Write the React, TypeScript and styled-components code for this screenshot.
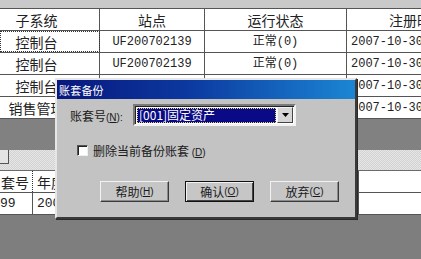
import React from "react";
import styled, { createGlobalStyle } from "styled-components";

const GlobalStyle = createGlobalStyle`
  html, body {
    margin: 0;
    padding: 0;
    background: #7e7e7e;
  }
  body {
    font-family: "Noto Sans CJK SC", "Liberation Sans", sans-serif;
  }
`;

const topRows = [
  { sys: "控制台", site: "UF200702139", state: "正常(0)", date: "2007-10-30", focus: true },
  { sys: "控制台", site: "UF200702139", state: "正常(0)", date: "2007-10-30" },
  { sys: "控制台", site: "UF200702139", state: "正常(0)", date: "2007-10-30" },
  { sys: "销售管理", site: "UF200702139", state: "正常(0)", date: "2007-10-30" },
];

function App() {
  return (
    <>
      <GlobalStyle />
      <Screen>
        <TopStrip />
        <Grid>
          <Row $header>
            <Cell $pr={26}>子系统</Cell>
            <Cell>站点</Cell>
            <Cell>运行状态</Cell>
            <Cell $last>注册时间</Cell>
          </Row>
          {topRows.map((r, i) => (
            <Row key={i}>
              <Cell $pr={26} $focus={r.focus}>{r.sys}</Cell>
              <Cell $mono>{r.site}</Cell>
              <Cell $mono>{r.state}</Cell>
              <Cell $mono $last $left>{r.date}</Cell>
            </Row>
          ))}
        </Grid>
        <GrayGap />
        <TabStrip>
          <TinyButton />
        </TabStrip>
        <Grid2>
          <Row2 $header>
            <Cell2 $right $focus>套号</Cell2>
            <Cell2>年度</Cell2>
            <Cell2 $last />
          </Row2>
          <Row2>
            <Cell2 $mono>99</Cell2>
            <Cell2 $mono>2007</Cell2>
            <Cell2 $last />
          </Row2>
        </Grid2>

        <Dialog>
          <TitleBar>账套备份</TitleBar>
          <Body>
            <FieldRow>
              <Label>
                账套号<Accel>(<u>N</u>):</Accel>
              </Label>
              <Select>
                <SelectValue>
                  <Picked>[001]固定资产</Picked>
                </SelectValue>
                <DropButton>
                  <svg width="7" height="4" viewBox="0 0 7 4">
                    <path d="M0 0h7L3.5 4z" fill="#000" />
                  </svg>
                </DropButton>
              </Select>
            </FieldRow>
            <CheckRow>
              <Box />
              <CheckText>
                删除当前备份账套 <Accel>(<u>D</u>)</Accel>
              </CheckText>
            </CheckRow>
            <Buttons>
              <Button>
                帮助<Accel>(<u>H</u>)</Accel>
              </Button>
              <Button $default>
                确认<Accel>(<u>O</u>)</Accel>
              </Button>
              <Button>
                放弃<Accel>(<u>C</u>)</Accel>
              </Button>
            </Buttons>
          </Body>
        </Dialog>
      </Screen>
    </>
  );
}

const Screen = styled.div`
  position: relative;
  width: 421px;
  height: 259px;
  overflow: hidden;
  background: #7e7e7e;
`;

const TopStrip = styled.div`
  height: 8px;
  background: #c9c9c9;
`;

const Grid = styled.div`
  width: 487px;
  border-top: 1px solid #555;
  background: #fff;
`;

const Row = styled.div<{ $header?: boolean }>`
  display: grid;
  grid-template-columns: 100px 105px 142px 140px;
  height: 21px;
  border-bottom: 1px solid #555;
  font-size: 14px;
  color: #222;
`;

const Cell = styled.div<{ $pr?: number; $mono?: boolean; $last?: boolean; $left?: boolean; $focus?: boolean }>`
  display: flex;
  align-items: center;
  justify-content: ${(p) => (p.$left ? "flex-start" : "center")};
  padding: 0 ${(p) => p.$pr ?? 0}px 0 ${(p) => (p.$left ? 4 : 0)}px;
  border-right: ${(p) => (p.$last ? "none" : "1px solid #555")};
  outline: ${(p) => (p.$focus ? "1px dotted #333" : "none")};
  outline-offset: -1px;
  font-family: ${(p) =>
    p.$mono
      ? '"Liberation Mono", "Noto Sans CJK SC", monospace'
      : '"Noto Sans CJK SC", sans-serif'};
  font-size: ${(p) => (p.$mono ? "12px" : "14px")};
  white-space: nowrap;
  overflow: hidden;
  line-height: 1;
`;

const GrayGap = styled.div`
  height: 31px;
  background: #818181;
`;

const TabStrip = styled.div`
  height: 20px;
  background-color: #dedede;
  background-image: repeating-conic-gradient(#d2d2d2 0% 25%, #e6e6e6 0% 50%);
  background-size: 2px 2px;
  border-bottom: 1px solid #6a6a6a;
`;

const TinyButton = styled.div`
  width: 9px;
  height: 13px;
  margin-left: -1px;
  background: #e4e4e4;
  border-right: 1px solid #555;
  border-bottom: 1px solid #555;
`;

const Grid2 = styled.div`
  width: 421px;
  background: #fff;
`;

const Row2 = styled.div<{ $header?: boolean }>`
  display: grid;
  grid-template-columns: 33px 326px 1fr;
  height: 21px;
  border-bottom: 1px solid #555;
  color: #222;
`;

const Cell2 = styled.div<{ $right?: boolean; $mono?: boolean; $last?: boolean; $focus?: boolean }>`
  display: flex;
  align-items: center;
  justify-content: ${(p) => (p.$right ? "flex-end" : "flex-start")};
  padding: 0 ${(p) => (p.$right ? 3 : 0)}px 0 ${(p) => (p.$right ? 0 : 4)}px;
  border-right: ${(p) => (p.$last ? "none" : p.$focus ? "1px dotted #333" : "1px solid #555")};
  font-family: ${(p) =>
    p.$mono
      ? '"Liberation Mono", "Noto Sans CJK SC", monospace'
      : '"Noto Sans CJK SC", sans-serif'};
  font-size: ${(p) => (p.$mono ? "13px" : "14px")};
  white-space: nowrap;
  overflow: hidden;
  line-height: 1;
  &:first-child {
    padding-left: 0;
  }
`;

/* dialog floats over the grids */
const Dialog = styled.div`
  position: absolute;
  left: 55px;
  top: 78px;
  width: 302px;
  height: 141px;
  box-sizing: border-box;
  background: #c3c3c3;
  border: 2px solid;
  border-color: #e6e6e6 #3a3a3a #3a3a3a #e6e6e6;
  box-shadow: 1px 1px 0 #2a2a2a;
  display: flex;
  flex-direction: column;
`;

const TitleBar = styled.div`
  height: 19px;
  padding-left: 2px;
  display: flex;
  align-items: center;
  color: #fff;
  font-size: 11px;
  letter-spacing: 0.2px;
  background: linear-gradient(to right, #08177e 0%, #0c3aa0 45%, #1b86d4 100%);
`;

const Body = styled.div`
  display: flex;
  flex-direction: column;
  padding: 5px 0 0 13px;
  font-size: 12px;
  color: #1a1a1a;
`;

const FieldRow = styled.div`
  display: flex;
  align-items: center;
  height: 22px;
  gap: 5px;
`;

const Label = styled.span`
  flex: none;
  width: 58px;
  white-space: nowrap;
`;

const Accel = styled.span`
  font-family: "Liberation Sans", sans-serif;
  font-size: 10px;
`;

const Select = styled.div`
  display: flex;
  align-items: stretch;
  width: 163px;
  height: 22px;
  box-sizing: border-box;
  background: #fff;
  border: 2px solid;
  border-color: #7a7a7a #f2f2f2 #f2f2f2 #7a7a7a;
  box-shadow: inset 1px 1px 0 #222;
`;

const SelectValue = styled.div`
  flex: 1;
  padding: 2px 1px 1px 2px;
  display: flex;
`;

const Picked = styled.div`
  flex: 1;
  background: #0a0a86;
  color: #fff;
  font-size: 12px;
  line-height: 14px;
  padding-left: 2px;
  outline: 1px dotted #e8d860;
  outline-offset: -1px;
  white-space: nowrap;
`;

const DropButton = styled.div`
  width: 14px;
  margin: 1px 1px 1px 0;
  display: flex;
  align-items: center;
  justify-content: center;
  background: #d6d6d6;
  border: 1px solid;
  border-color: #f4f4f4 #444 #444 #f4f4f4;
`;

const CheckRow = styled.div`
  display: flex;
  align-items: center;
  gap: 5px;
  margin: 17px 0 0 7px;
  height: 14px;
`;

const Box = styled.div`
  width: 11px;
  height: 11px;
  box-sizing: border-box;
  background: #fff;
  border: 1px solid;
  border-color: #555 #eee #eee #555;
  box-shadow: inset 1px 1px 0 #222;
`;

const CheckText = styled.span`
  white-space: nowrap;
`;

const Buttons = styled.div`
  display: flex;
  gap: 16px;
  margin: 24px 0 0 30px;
`;

const Button = styled.div<{ $default?: boolean }>`
  width: 69px;
  height: 21px;
  box-sizing: border-box;
  display: flex;
  align-items: center;
  justify-content: center;
  background: #c6c6c6;
  border: 1px solid;
  border-color: ${(p) => (p.$default ? "#111" : "#f2f2f2 #3a3a3a #3a3a3a #f2f2f2")};
  box-shadow: ${(p) =>
    p.$default
      ? "inset 1px 1px 0 #f2f2f2, inset -1px -1px 0 #444"
      : "inset -1px -1px 0 #8a8a8a"};
  font-size: 12px;
  white-space: nowrap;
`;

export default App;
